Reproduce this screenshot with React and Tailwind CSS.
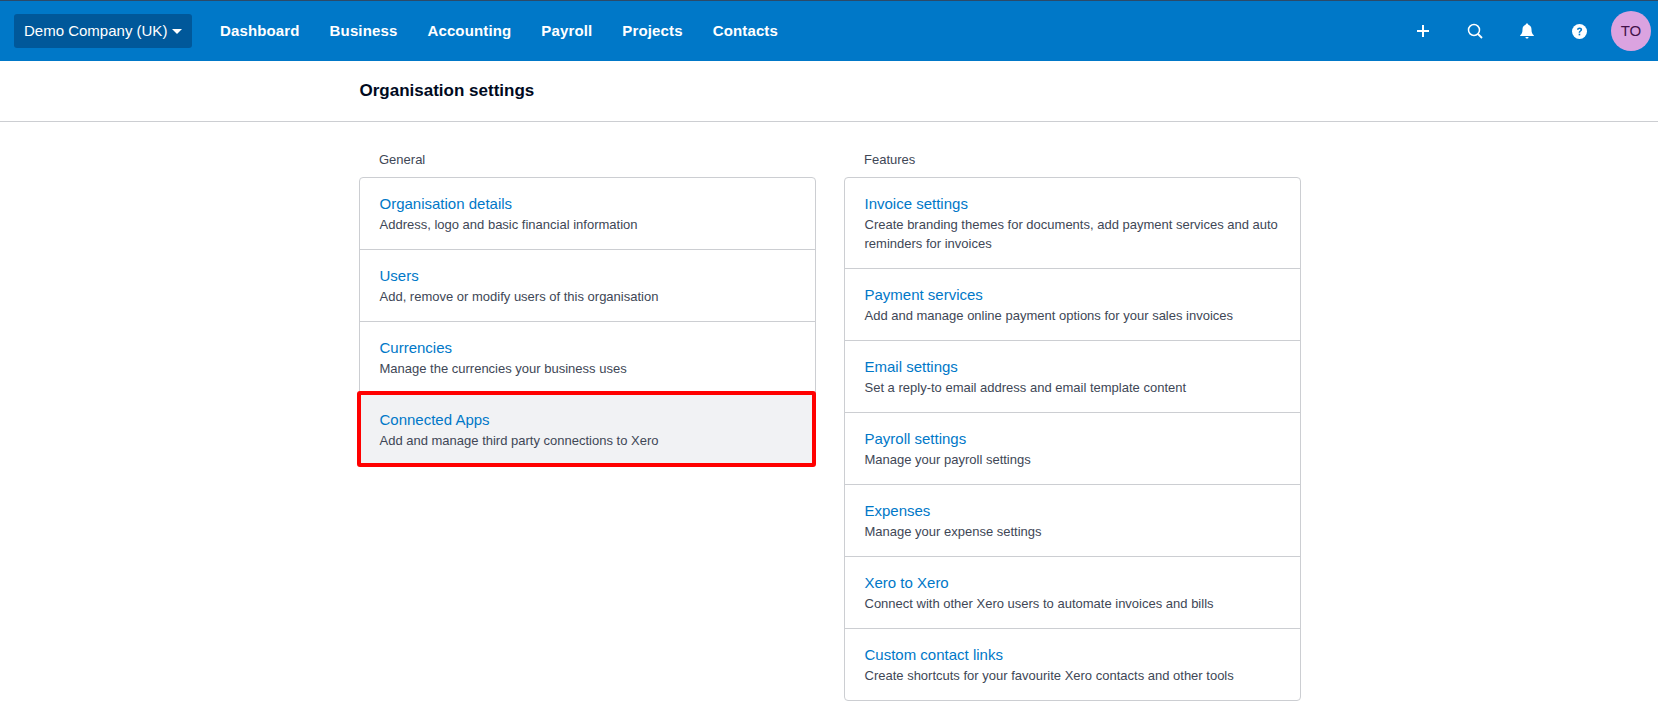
import React from 'react'

const general = [
  { title: 'Organisation details', desc: 'Address, logo and basic financial information' },
  { title: 'Users', desc: 'Add, remove or modify users of this organisation' },
  { title: 'Currencies', desc: 'Manage the currencies your business uses' },
  { title: 'Connected Apps', desc: 'Add and manage third party connections to Xero', marked: true },
]

const features = [
  { title: 'Invoice settings', desc: 'Create branding themes for documents, add payment services and auto reminders for invoices' },
  { title: 'Payment services', desc: 'Add and manage online payment options for your sales invoices' },
  { title: 'Email settings', desc: 'Set a reply-to email address and email template content' },
  { title: 'Payroll settings', desc: 'Manage your payroll settings' },
  { title: 'Expenses', desc: 'Manage your expense settings' },
  { title: 'Xero to Xero', desc: 'Connect with other Xero users to automate invoices and bills' },
  { title: 'Custom contact links', desc: 'Create shortcuts for your favourite Xero contacts and other tools' },
]

const nav = ['Dashboard', 'Business', 'Accounting', 'Payroll', 'Projects', 'Contacts']

function Row({ item, last }) {
  return (
    <div className={`relative pl-[19.5px] pr-5 py-[15px] ${last ? '' : 'border-b border-[#ccced2]'} ${item.marked ? 'bg-[#f1f2f4] rounded-b' : ''}`}>
      <div className="text-[15px] leading-[22px] text-[#0078c8]">{item.title}</div>
      <div className="text-[13px] leading-[19px] text-[#404756]">{item.desc}</div>
      {item.marked && <div className="absolute -left-[3px] -right-[1px] -top-[3px] -bottom-[2px] border-4 border-[#ff0000] rounded-[3px]"></div>}
    </div>
  )
}

function Column({ label, items }) {
  return (
    <div className="w-[457px]">
      <div className="px-5 text-[13px] leading-[19px] text-[#404756] mb-2">{label}</div>
      <div className="border border-[#ccced2] rounded-[4px] bg-white">
        {items.map((item, i) => <Row key={item.title} item={item} last={i === items.length - 1} />)}
      </div>
    </div>
  )
}

export default function App() {
  return (
    <div className="h-[716px] overflow-hidden bg-white font-['Liberation_Sans',Arial,sans-serif]">
      <header className="h-[61px] bg-[#0078c8] border-t border-[#2c4a68] flex items-center pl-[14px] pr-[7px]">
        <button className="h-[34px] w-[178px] rounded-[3px] bg-[#00589a] text-white text-[15px] flex items-center pl-[10px] gap-[5px]">
          Demo Company (UK)
          <svg width="10" height="5" viewBox="0 0 10 5"><path d="M0 0h10L5 5z" fill="#fff" /></svg>
        </button>
        <nav className="flex ml-7 gap-[30px] text-white text-[15px] font-bold tracking-[0.14px]">
          {nav.map(n => <a key={n}>{n}</a>)}
        </nav>
        <div className="ml-auto flex items-center text-white">
          <svg className="mr-[37px]" width="14" height="14" viewBox="0 0 14 14"><path d="M7 1v12M1 7h12" stroke="#fff" strokeWidth="2" /></svg>
          <svg className="mr-[37px]" width="16" height="16" viewBox="0 0 16 16" fill="none"><circle cx="7" cy="7" r="5.500" stroke="#fff" strokeWidth="1.500" /><path d="M11 11l4 4" stroke="#fff" strokeWidth="1.800" /></svg>
          <svg className="mr-[38px]" width="14" height="16" viewBox="0 0 14 16"><path d="M7 0.5c.8 0 1.2.5 1.3 1.2C10.500 2.300 11.500 4 11.500 6.500c0 3 .7 4.500 2.300 5.800v.7H.2v-.7C1.800 11 2.500 9.500 2.500 6.500 2.500 4 3.500 2.300 5.700 1.700 5.800 1 6.200.5 7 .5zM5.500 14h3c0 1-.6 1.500-1.500 1.500S5.500 15 5.500 14z" fill="#fff" /></svg>
          <svg className="mr-6" width="15" height="15" viewBox="0 0 16 16"><circle cx="8" cy="8" r="8" fill="#fff" /><path d="M5.300 6.200C5.400 4.600 6.500 3.700 8.100 3.700c1.600 0 2.700.9 2.700 2.200 0 1-.5 1.500-1.300 2.100-.6.400-.8.700-.8 1.400H7.100c0-1.100.3-1.700 1.100-2.300.6-.4.900-.7.900-1.100 0-.5-.4-.8-1-.8-.7 0-1.100.4-1.200 1z" fill="#0078c8" /><rect x="7.100" y="10.300" width="1.700" height="1.800" fill="#0078c8" /></svg>
          <div className="w-10 h-10 rounded-full bg-[#dba3e0] text-[#42124a] text-[15px] flex items-center justify-center">TO</div>
        </div>
      </header>
      <div className="h-[61px] border-b border-[#ccced2] pl-[359.5px] flex items-center text-[17px] font-bold text-[#000a1e]">
        Organisation settings
      </div>
      <main className="flex gap-[28px] pl-[359px] pt-7">
        <Column label="General" items={general} />
        <Column label="Features" items={features} />
      </main>
    </div>
  )
}
